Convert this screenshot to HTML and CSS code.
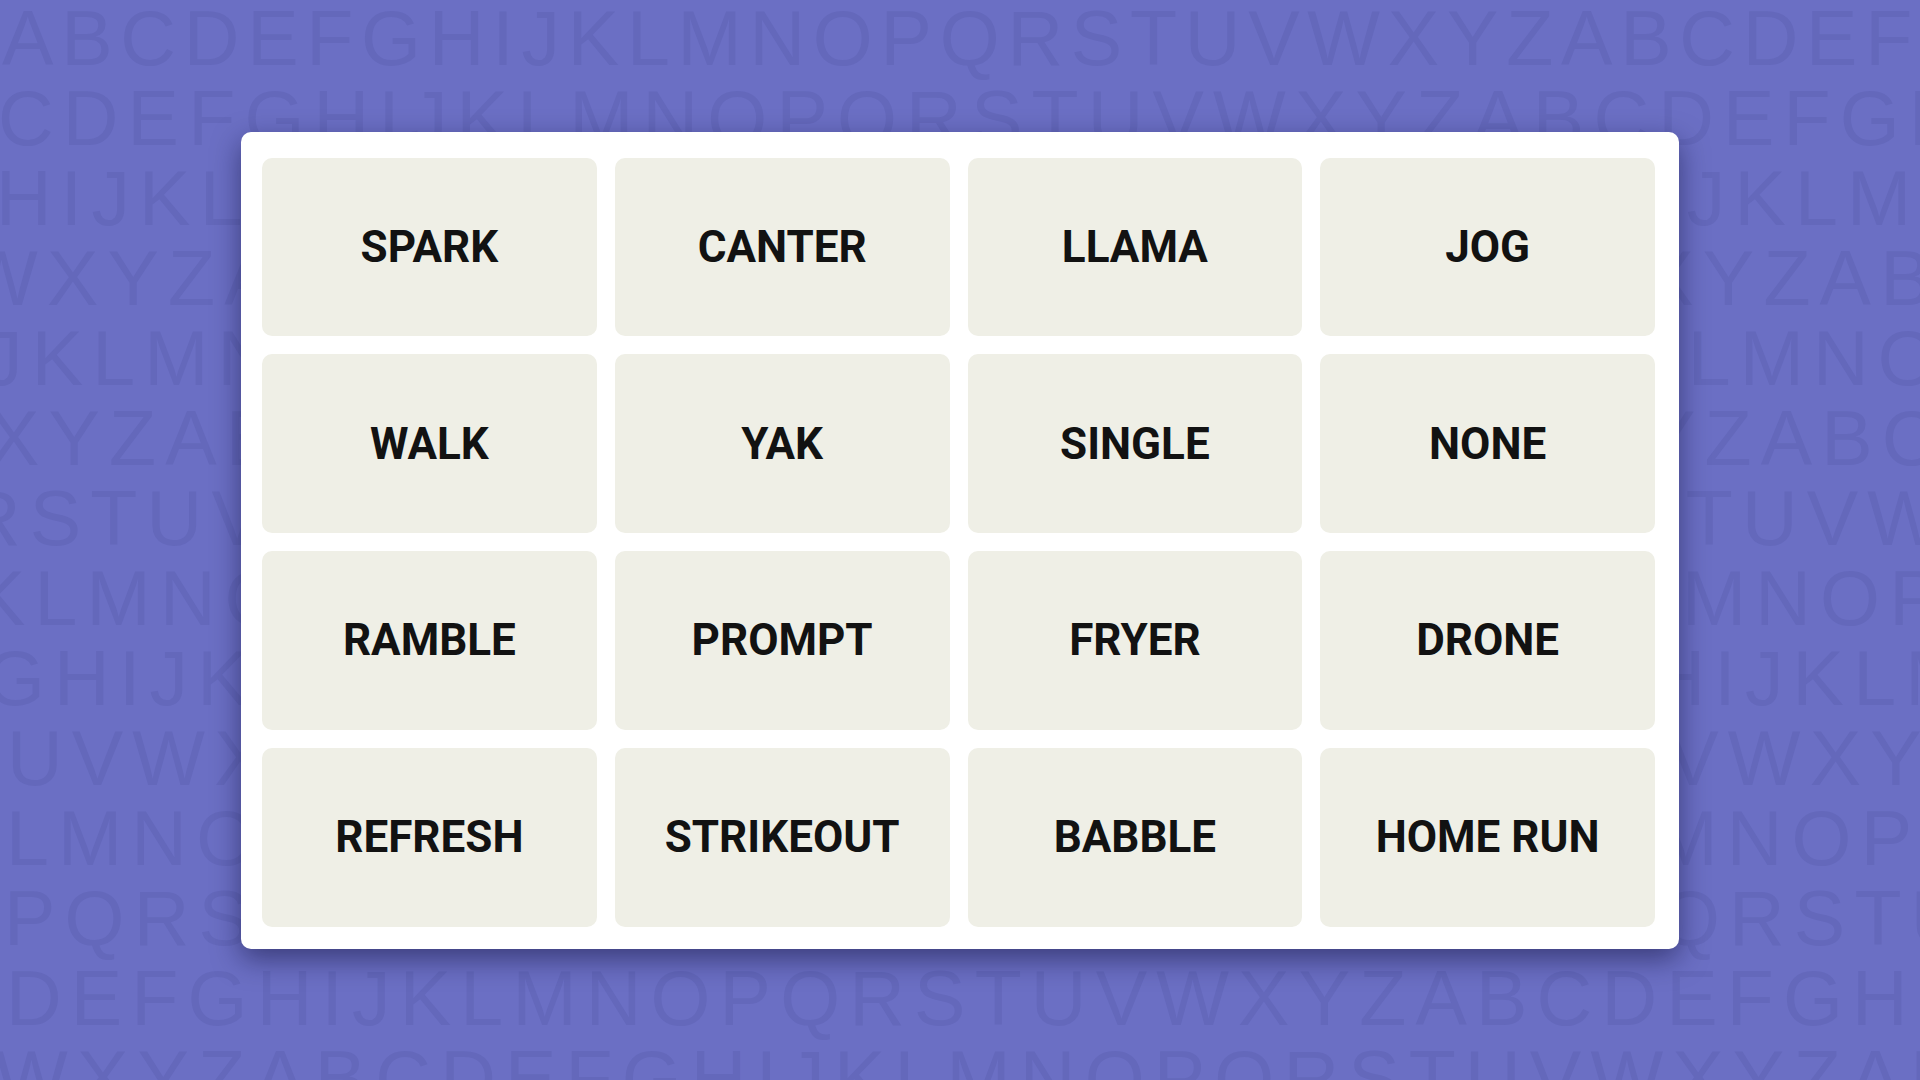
FILE: index.html
```html
<!DOCTYPE html>
<html lang="en">
<head>
<meta charset="utf-8">
<title>Connections</title>
<link rel="stylesheet" href="styles.css">
</head>
<body>
<div class="letters" aria-hidden="true">
  <div class="row r1">ABCDEFGHIJKLMNOPQRSTUVWXYZABCDEFGHIJKL</div>
  <div class="row r2">CDEFGHIJKLMNOPQRSTUVWXYZABCDEFGHIJKLMN</div>
  <div class="row r3">HIJKLMNOPQRSTUVWXYZABCDEFGHIJKLMNOPQRS</div>
  <div class="row r4">WXYZABCDEFGHIJKLMNOPQRSTUVWXYZABCDEFGH</div>
  <div class="row r5">JKLMNOPQRSTUVWXYZABCDEFGHIJKLMNOPQRSTU</div>
  <div class="row r6">XYZABCDEFGHIJKLMNOPQRSTUVWXYZABCDEFGHI</div>
  <div class="row r7">RSTUVWXYZABCDEFGHIJKLMNOPQRSTUVWXYZABC</div>
  <div class="row r8">KLMNOPQRSTUVWXYZABCDEFGHIJKLMNOPQRSTUV</div>
  <div class="row r9">GHIJKLMNOPQRSTUVWXYZABCDEFGHIJKLMNOPQR</div>
  <div class="row r10">UVWXYZABCDEFGHIJKLMNOPQRSTUVWXYZABCDEF</div>
  <div class="row r11">LMNOPQRSTUVWXYZABCDEFGHIJKLMNOPQRSTUVW</div>
  <div class="row r12">PQRSTUVWXYZABCDEFGHIJKLMNOPQRSTUVWXYZA</div>
  <div class="row r13">DEFGHIJKLMNOPQRSTUVWXYZABCDEFGHIJKLMNO</div>
  <div class="row r14">WXYZABCDEFGHIJKLMNOPQRSTUVWXYZABCDEFGH</div>
</div>

<main class="board">
  <div class="tile">SPARK</div>
  <div class="tile">CANTER</div>
  <div class="tile">LLAMA</div>
  <div class="tile">JOG</div>
  <div class="tile">WALK</div>
  <div class="tile">YAK</div>
  <div class="tile">SINGLE</div>
  <div class="tile">NONE</div>
  <div class="tile">RAMBLE</div>
  <div class="tile">PROMPT</div>
  <div class="tile">FRYER</div>
  <div class="tile">DRONE</div>
  <div class="tile">REFRESH</div>
  <div class="tile">STRIKEOUT</div>
  <div class="tile">BABBLE</div>
  <div class="tile">HOME RUN</div>
</main>
</body>
</html>
```

FILE: styles.css
```css
html, body {
  margin: 0;
  padding: 0;
}

body {
  position: relative;
  width: 100vw;
  height: 100vh;
  overflow: hidden;
  background: #6b6fc4;
  display: flex;
  align-items: center;
  justify-content: center;
}

/* faint alphabet pattern behind the board */
.letters {
  position: absolute;
  top: -2px;
  left: 0;
  right: 0;
  bottom: 0;
  z-index: 0;
  font-family: "Liberation Sans", Arial, sans-serif;
  font-size: 77px;
  line-height: 80px;
  letter-spacing: 9.2px;
  color: #6468bb;
  white-space: nowrap;
  overflow: hidden;
  user-select: none;
}

.row { display: block; }
.r1  { text-indent: 2px; letter-spacing: 7.8px; }
.r2  { text-indent: -2px; }
.r3  { text-indent: -4px; }
.r4  { text-indent: -35px; }
.r5  { text-indent: -16px; }
.r6  { text-indent: -12px; }
.r7  { text-indent: -35px; }
.r8  { text-indent: -26px; }
.r9  { text-indent: -15px; }
.r10 { text-indent: 7px; }
.r11 { text-indent: 6px; }
.r12 { text-indent: 4px; }
.r13 { text-indent: 6px; }
.r14 { text-indent: -5px; }

/* the word board */
.board {
  position: relative;
  z-index: 1;
  box-sizing: border-box;
  width: 1438px;
  height: 817px;
  padding: 26px 24px 22px 21px;
  background: #ffffff;
  border-radius: 10px;
  box-shadow: 0 10px 28px rgba(10, 10, 50, 0.5);
  display: grid;
  grid-template-columns: repeat(4, 1fr);
  grid-template-rows: repeat(4, 1fr);
  column-gap: 18px;
  row-gap: 18px;
}

.tile {
  background: #efefe6;
  border-radius: 10px;
  display: flex;
  align-items: center;
  justify-content: center;
  font-family: Roboto, "Liberation Sans", Arial, sans-serif;
  font-weight: 700;
  font-size: 44px;
  color: #121212;
  text-transform: uppercase;
}
```
